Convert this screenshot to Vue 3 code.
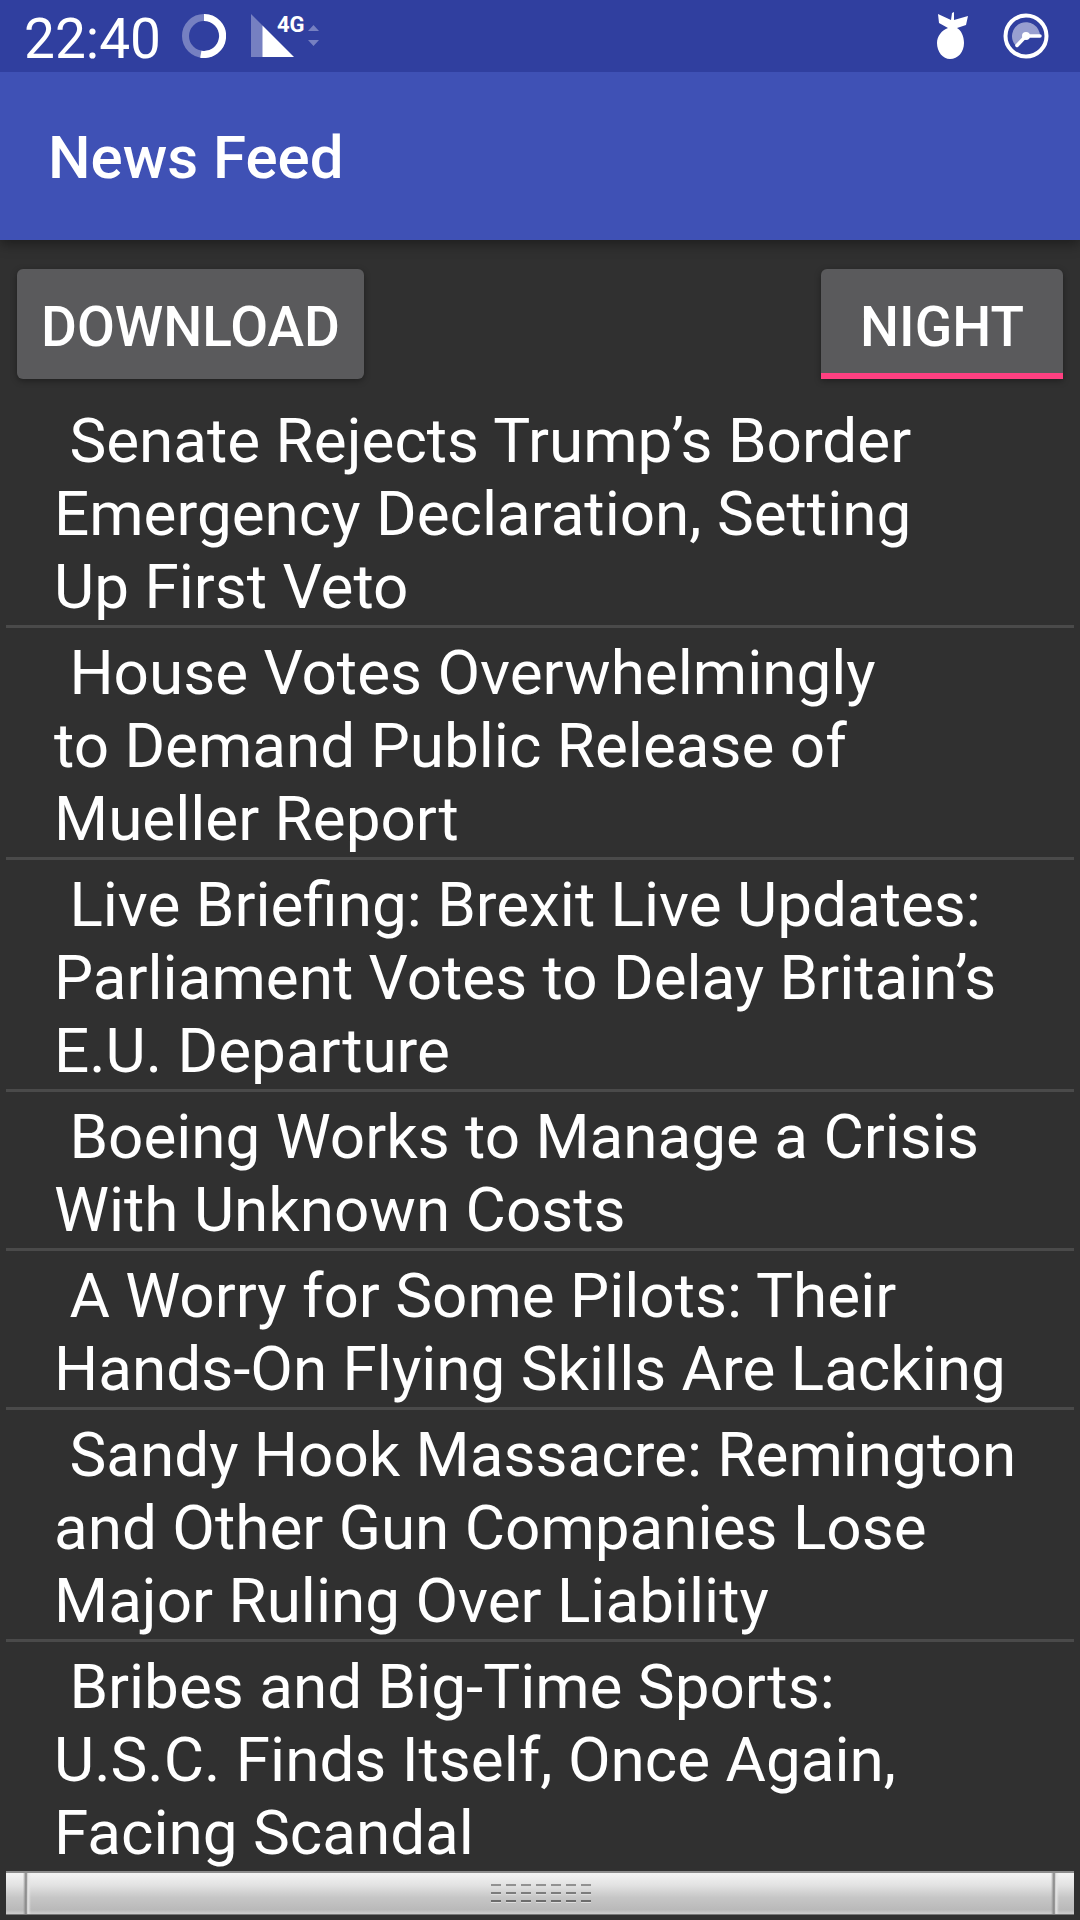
<script setup>
import { ref } from 'vue'

const night = ref(true)

const headlines = [
  ['Senate Rejects Trump’s Border', 'Emergency Declaration, Setting', 'Up First Veto'],
  ['House Votes Overwhelmingly', 'to Demand Public Release of', 'Mueller Report'],
  ['Live Briefing: Brexit Live Updates:', 'Parliament Votes to Delay Britain’s', 'E.U. Departure'],
  ['Boeing Works to Manage a Crisis', 'With Unknown Costs'],
  ['A Worry for Some Pilots: Their', 'Hands-On Flying Skills Are Lacking'],
  ['Sandy Hook Massacre: Remington', 'and Other Gun Companies Lose', 'Major Ruling Over Liability'],
  ['Bribes and Big-Time Sports:', 'U.S.C. Finds Itself, Once Again,', 'Facing Scandal'],
].map((lines) => ' ' + lines.join('\n'))
</script>

<template>
  <div class="screen">
    <div class="status">
      <span class="clock">22:40</span>
      <svg class="battery" width="44" height="44" viewBox="0 0 44 44" aria-hidden="true">
        <circle cx="22" cy="22" r="18.5" fill="none" stroke="#7680c1" stroke-width="7" />
        <path d="M22 3.500A18.500 18.500 0 1 1 18.800 40.200" fill="none" stroke="#fff" stroke-width="7" />
      </svg>
      <div class="signal">
        <svg width="70" height="44" viewBox="0 0 70 44" aria-hidden="true">
          <path d="M0 0L12 12V43H0Z" fill="#7680c1" />
          <path d="M11.500 11.500L43 43H11.500Z" fill="#fff" />
          <path d="M57 17L62.500 11L68 17ZM57 26H68L62.500 32Z" fill="#7680c1" />
        </svg>
        <span class="network">4G</span>
      </div>
      <span class="spacer"></span>
      <svg class="bomb" width="32" height="48" viewBox="0 0 32 48" aria-hidden="true">
        <path d="M1 2L14 8L15 1L17 0V8L31 4L29 13L20 16C24 18 27 24 27 31C27 40 21 47 13 47C6 47 0 40 0 31C0 24 5 18 11 16L2 11Z" fill="#fff" />
      </svg>
      <svg width="46" height="46" viewBox="0 0 46 46" aria-hidden="true">
        <circle cx="23" cy="23" r="20.500" fill="none" stroke="#fff" stroke-width="4" />
        <path d="M23 23L13 33A14 14 0 1 1 37 23Z" fill="#989fd0" />
        <path d="M37 23H23L14 32.500" fill="none" stroke="#fff" stroke-width="3.500" stroke-linecap="round" />
        <circle cx="23" cy="23" r="4" fill="#fff" />
      </svg>
    </div>

    <header class="appbar">
      <h1>News Feed</h1>
    </header>

    <div class="actions">
      <button type="button" class="btn download">DOWNLOAD</button>
      <button type="button" class="btn toggle" :class="{ on: night }" :aria-pressed="night" @click="night = !night">NIGHT</button>
    </div>

    <ul class="feed">
      <li v-for="headline in headlines" :key="headline">{{ headline }}</li>
    </ul>

    <button type="button" class="handle" aria-label="Open drawer">
      <span class="groove"></span>
      <svg width="102" height="22" viewBox="0 0 102 22" aria-hidden="true">
        <g v-for="row in 3" :key="row">
          <g v-for="col in 7" :key="col">
            <rect :x="(col - 1) * 15 + 1" :y="(row - 1) * 8 + 1" width="10" height="2" :fill="['#929292', '#7c7c7c', '#6c6c6c'][row - 1]" />
            <rect :x="(col - 1) * 15 + 1" :y="(row - 1) * 8 + 3" width="10" height="1" fill="#dedede" />
          </g>
        </g>
      </svg>
      <span class="groove"></span>
    </button>
  </div>
</template>

<style>
body {
  margin: 0;
  background: #303030;
}
</style>

<style scoped>
.screen {
  display: flex;
  flex-direction: column;
  min-height: 100vh;
  background: #303030;
  color: #fff;
  font-family: Roboto, "Noto Sans", sans-serif;
}

.status {
  position: relative;
  z-index: 1;
  display: flex;
  align-items: center;
  height: 72px;
  padding: 0 31px 0 24px;
  background: #303f9f;
}

.clock {
  padding-top: 6px;
  font-size: 55px;
  line-height: 66px;
}

.battery {
  margin-left: 21px;
}

.signal {
  position: relative;
  height: 44px;
  margin-left: 25px;
}

.network {
  position: absolute;
  top: 0;
  left: 26px;
  font-size: 22px;
  font-weight: 700;
  line-height: 22px;
}

.spacer {
  flex: 1;
}

.bomb {
  margin-right: 34px;
}

.appbar {
  display: flex;
  align-items: center;
  height: 164px;
  padding: 4px 48px 0;
  background: #3f51b5;
  box-shadow: 0 4px 12px rgba(0, 0, 0, 0.4);
}

h1 {
  margin: 0;
  font-size: 60px;
  font-weight: 500;
  line-height: 70px;
}

.actions {
  display: flex;
  justify-content: space-between;
  padding: 29px 17px 17px;
}

.btn {
  height: 110px;
  padding: 6px 24px 0;
  border: 0;
  border-radius: 6px;
  background: #5a5a5c;
  box-shadow: 0 2px 6px rgba(0, 0, 0, 0.35);
  color: #fff;
  font-family: inherit;
  font-size: 55px;
  font-weight: 500;
  line-height: 66px;
}

.download {
  min-width: 347px;
}

.toggle {
  min-width: 242px;
}

.toggle.on {
  padding-top: 12px;
  border-bottom: 6px solid #ff4081;
  border-radius: 6px 6px 0 0;
}

.feed {
  margin: 0 6px;
  padding: 0;
  list-style: none;
}

.feed li {
  padding: 8px 48px 2px;
  border-bottom: 3px solid #4a4a4a;
  font-size: 62px;
  line-height: 73px;
  white-space: pre-wrap;
}

.feed li:last-child {
  border-bottom: 0;
}

.handle {
  display: flex;
  align-items: center;
  justify-content: space-between;
  height: 44px;
  margin: 0 6px 5px;
  padding: 0 15px 0 17px;
  border: 0;
  border-top: 2px solid #8c8c8c;
  border-bottom: 1px solid #777;
  background: linear-gradient(#f4f4f4, #e2e2e2 30%, #c6c6c6 60%, #b9b9b9 90%, #cfcfcf);
}

.groove {
  width: 8px;
  height: 41px;
  background: linear-gradient(90deg, #c8c8c800, #888 35%, #999 45%, #e6e6e6 60%, #dddddd00);
}
</style>
